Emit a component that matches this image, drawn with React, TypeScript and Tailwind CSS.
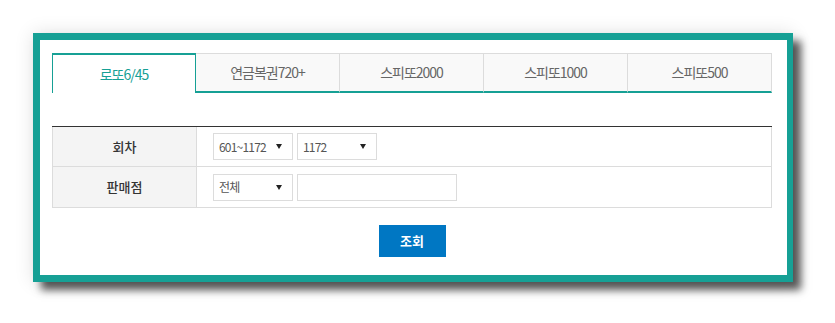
import React from "react";

const tabs = ["로또6/45", "연금복권720+", "스피또2000", "스피또1000", "스피또500"];

function Select({ label, w }: { label: string; w: string }) {
  return (
    <div className={`flex h-[27px] items-center justify-between border border-[#dcdcdc] bg-white pl-[5px] pr-[10px] text-[12px] text-[#555] ${w}`}>
      <span className="tracking-[-0.8px]">{label}</span>
      <span className="h-0 w-0 border-x-[3.5px] border-t-[5px] border-x-transparent border-t-[#222]" />
    </div>
  );
}

export default function App() {
  return (
    <div className="h-[323px] w-[835px] bg-white pl-[33px] pt-[33px]" style={{ fontFamily: '"Noto Sans CJK KR", "Noto Sans", sans-serif' }}>
      <div className="h-[249px] w-[760px] border-[7px] border-r-[6px] border-[#16a095] bg-white pl-[12px] pt-[13px] shadow-[0_0_18px_rgba(0,0,0,0.12),8px_8px_8px_rgba(0,0,0,0.65)]">
        <div className="flex w-[720px]">
          {tabs.map((t, i) =>
            i === 0 ? (
              <div key={t} className="flex h-[40px] w-[144px] items-center justify-center border-x border-t-2 border-[#16a095] bg-white text-[14px] tracking-[-1px] text-[#16a095]">
                {t}
              </div>
            ) : (
              <div key={t} className="flex h-[40px] w-[144px] items-center justify-center border-t border-r border-b-2 border-[#dcdcdc] border-b-[#16a095] bg-[#f9f9f9] text-[14px] tracking-[-1px] text-[#666]">
                {t}
              </div>
            )
          )}
        </div>
        <div className="mt-[33px] w-[720px] border-t border-[#333]">
          <div className="flex h-[40px] border-b border-[#dcdcdc]">
            <div className="flex w-[145px] items-center justify-center border-x border-[#dcdcdc] bg-[#f4f4f4] text-[13px] font-medium text-[#333]">회차</div>
            <div className="flex flex-1 items-center gap-[4px] border-r border-[#dcdcdc] pl-[16px]">
              <Select label="601~1172" w="w-[80px]" />
              <Select label="1172" w="w-[80px]" />
            </div>
          </div>
          <div className="flex h-[41px] border-b border-[#dcdcdc]">
            <div className="flex w-[145px] items-center justify-center border-x border-[#dcdcdc] bg-[#f4f4f4] text-[13px] font-medium text-[#333]">판매점</div>
            <div className="flex flex-1 items-center gap-[4px] border-r border-[#dcdcdc] pl-[16px]">
              <Select label="전체" w="w-[80px]" />
              <div className="h-[27px] w-[160px] border border-[#dcdcdc] bg-white" />
            </div>
          </div>
        </div>
        <div className="mt-[17px] flex w-[720px] justify-center">
          <button className="flex h-[32px] w-[67px] items-center justify-center bg-[#0077c3] text-[13px] font-bold text-white">조회</button>
        </div>
      </div>
    </div>
  );
}
